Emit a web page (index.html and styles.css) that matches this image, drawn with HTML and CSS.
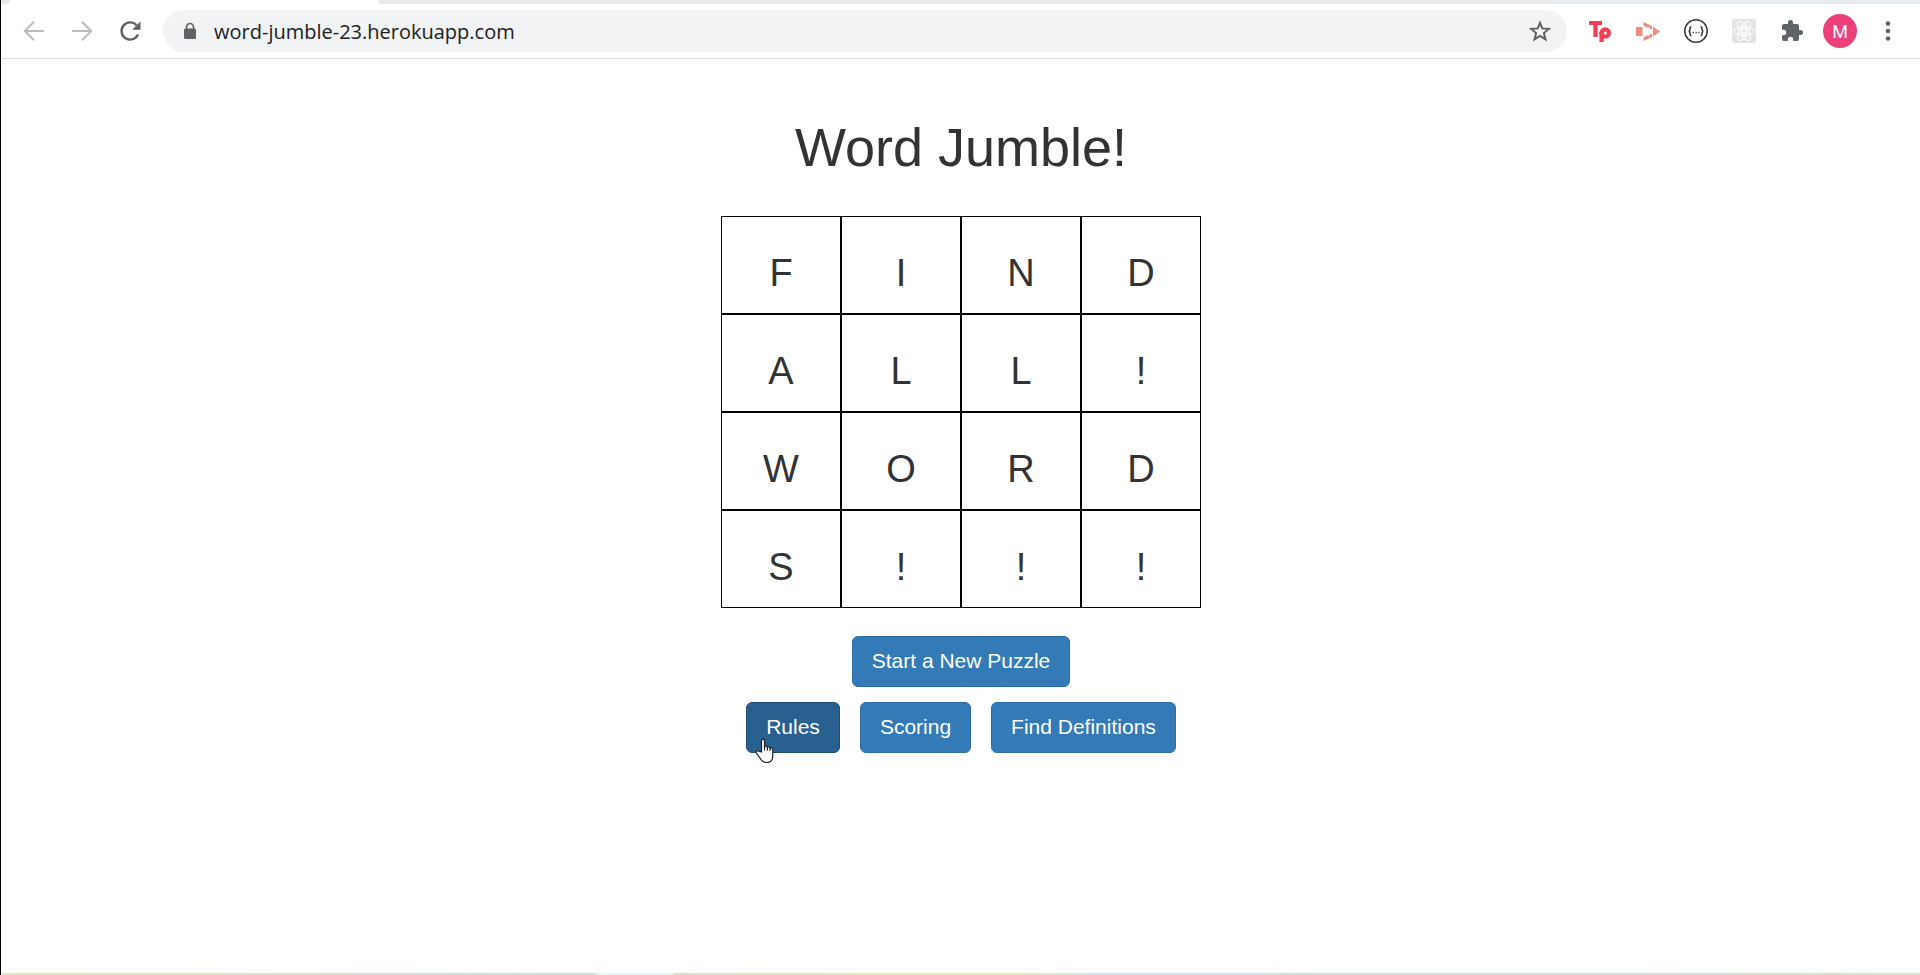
FILE: index.html
```html
<!DOCTYPE html>
<html lang="en">
<head>
<meta charset="utf-8">
<title>Word Jumble!</title>
<link rel="stylesheet" href="styles.css">
</head>
<body>
<div class="window">
  <div class="tab-strip"><span class="tab-edge"></span><span class="active-tab"></span><span class="tab-rest"></span></div>
  <header class="toolbar">
    <nav class="nav" aria-label="Browser navigation">
      <button class="tool" aria-label="Back" disabled><svg width="24" height="24" viewBox="0 0 24 24" fill="none" stroke="#babcbe" stroke-width="2"><path d="M22 12H3.500M12 2.700 2.700 12l9.300 9.300"/></svg></button>
      <button class="tool" aria-label="Forward" disabled><svg width="24" height="24" viewBox="0 0 24 24" fill="none" stroke="#babcbe" stroke-width="2"><path d="M2 12h18.500M12 2.700l9.300 9.300-9.300 9.300"/></svg></button>
      <button class="tool" aria-label="Reload"><svg width="24" height="24" viewBox="0 0 24 24"><path d="M20 15.500A8.600 8.600 0 1 1 18.500 6.200" fill="none" stroke="#5f6368" stroke-width="2.400"/><path d="M22.500 2.500v8.300h-8.300z" fill="#5f6368"/></svg></button>
    </nav>
    <div class="omnibox">
      <svg class="lock" width="14" height="18" viewBox="0 0 14 18"><path d="M3.500 8V5a3.500 3.500 0 0 1 7 0v3" fill="none" stroke="#5f6368" stroke-width="1.700"/><rect x="1" y="6.500" width="12" height="10.500" rx="1.500" fill="#5f6368"/></svg>
      <input class="url" type="text" aria-label="Address" value="word-jumble-23.herokuapp.com">
      <button class="tool" aria-label="Bookmark this page"><svg width="24" height="24" viewBox="0 0 24 24" fill="none" stroke="#5f6368" stroke-width="2"><path d="m12 3.800 2.300 5.600 6.600.5-5 4.200 1.600 6.300-5.500-3.400-5.500 3.400 1.600-6.300-5-4.200 6.600-.5z"/></svg></button>
    </div>
    <div class="extensions">
      <button class="tool" aria-label="Tp"><svg width="24" height="24" viewBox="0 0 24 24" fill="none" stroke="#ef4056" stroke-width="4.200"><path d="M1 4h13M7.500 3v15"/><circle cx="17.300" cy="14" r="3.700"/><path d="M13.500 13v10"/></svg></button>
      <button class="tool" aria-label="Screen recorder"><svg width="24" height="24" viewBox="0 0 24 24" fill="#f28b82"><path d="M0 8h6.500v9H0zM7.500 3l8.500 4v3h-2V8.500H9.500V7h-2zM7.500 22l8.500-4v-3h-2v1.500H9.500V18h-2zM17 7.500l7 5-7 5z"/></svg></button>
      <button class="tool" aria-label="JSON viewer"><svg width="24" height="24" viewBox="0 0 24 24" fill="none" stroke="#35383c" stroke-width="1.500"><circle cx="12" cy="12" r="11.200"/><path d="M7.500 7.800C4.500 7.800 7.500 12.300 4.500 12.300c3 0 0 4.500 3 4.500M16.500 7.800c3 0 0 4.500 3 4.500-3 0 0 4.500-3 4.500"/><path d="M8.700 13.500h7" stroke-dasharray="1.300 1.500"/></svg></button>
      <button class="tool" aria-label="React tools"><svg width="24" height="24" viewBox="0 0 24 24"><rect width="24" height="24" rx="2" fill="#e1e3e4"/><g fill="none" stroke="#fff"><ellipse cx="12" cy="12" rx="10.500" ry="4.500"/><ellipse cx="12" cy="12" rx="10.500" ry="4.500" transform="rotate(60 12 12)"/><ellipse cx="12" cy="12" rx="10.500" ry="4.500" transform="rotate(120 12 12)"/><circle cx="12" cy="12" r="2.500" stroke-width="1.500"/></g></svg></button>
      <button class="tool" aria-label="Extensions"><svg width="24" height="24" viewBox="0 0 24 24" fill="#5f6368"><path d="M20.500 11H19V7a2 2 0 0 0-2-2h-4V3.500a2.500 2.500 0 0 0-5 0V5H4a2 2 0 0 0-2 2v3.800h1.500a2.700 2.700 0 0 1 0 5.400H2V20a2 2 0 0 0 2 2h3.800v-1.500a2.700 2.700 0 0 1 5.400 0V22H17a2 2 0 0 0 2-2v-4h1.500a2.500 2.500 0 0 0 0-5z"/></svg></button>
      <button class="avatar" aria-label="Profile M">M</button>
      <button class="tool" aria-label="Menu"><svg width="24" height="24" viewBox="0 0 24 24" fill="#5f6368"><circle cx="12" cy="4.500" r="2.300"/><circle cx="12" cy="12" r="2.300"/><circle cx="12" cy="19.500" r="2.300"/></svg></button>
    </div>
  </header>
  <main class="page">
    <h1 class="title">Word Jumble!</h1>
    <table class="board">
      <tbody>
      <tr><td>F</td><td>I</td><td>N</td><td>D</td></tr>
      <tr><td>A</td><td>L</td><td>L</td><td>!</td></tr>
      <tr><td>W</td><td>O</td><td>R</td><td>D</td></tr>
      <tr><td>S</td><td>!</td><td>!</td><td>!</td></tr>
      </tbody>
    </table>
    <div class="actions">
      <button class="btn">Start a New Puzzle</button>
    </div>
    <div class="actions">
      <button class="btn btn-hover">Rules<svg class="pointer" width="20" height="26" viewBox="0 0 20 26"><path d="M6.500 14V3c0-2.400 3-2.400 3 0v5.500c1-1 2.800-.6 2.900.7 1-.8 2.600-.3 2.700.9 1.200-.6 2.700 0 2.700 1.500V18c0 4-2.500 6.500-6.300 6.500-3.500 0-5-1.500-6.500-4.500L1.300 15c-.8-2 1.500-3 2.700-1.700z" fill="#fff" stroke="#1b1b26" stroke-width="1.200"/><path d="M9.500 8v4.500M12.400 9v3.500M15.100 10v3" stroke="#1b1b26" stroke-width="1.200"/></svg></button>
      <button class="btn">Scoring</button>
      <button class="btn">Find Definitions</button>
    </div>
  </main>
  <footer class="bottom-strip"></footer>
</div>
</body>
</html>
```
FILE: styles.css
```css
* { box-sizing: border-box; }
body { margin: 0; background: #fff; color: #333; font-family: "Liberation Sans", Arial, sans-serif; }
button { font: inherit; margin: 0; }
.window { min-height: 100vh; display: flex; flex-direction: column; border-left: 1px solid #000; }

.tab-strip { display: flex; height: 4px; background: #fff; }
.tab-edge { width: 9px; background: #e7eaed; border-bottom-right-radius: 8px; }
.active-tab { width: 368px; }
.tab-rest { flex: 1; background: #e7eaed; border-bottom-left-radius: 8px; }

.toolbar { display: flex; align-items: center; height: 55px; padding: 0 20px 0 21px; border-bottom: 1px solid #dadce0; }
.nav { display: flex; gap: 24px; }
.tool { display: flex; padding: 0; border: 0; background: none; }
.omnibox { flex: 1; display: flex; align-items: center; height: 42px; margin: 0 21px; padding: 0 15px 0 20px; border-radius: 21px; background: #f1f3f4; }
.url { flex: 1; min-width: 0; margin: 0 17px; padding: 0; border: 0; background: none; color: #202124; font: 20px "Open Sans", sans-serif; }
.extensions { display: flex; align-items: center; gap: 24px; }
.avatar { width: 34px; height: 34px; margin: 0 -5px; padding: 0; border: 0; border-radius: 50%; background: #ec407a; color: #fff; font: 18px Roboto, sans-serif; }

.page { flex: 1; display: flex; flex-direction: column; align-items: center; padding-left: 1px; }
.title { margin: 58px 0 39px; font-size: 54px; line-height: 60px; font-weight: 400; }
.board { border-collapse: separate; border-spacing: 0; margin-bottom: 28px; }
.board td { width: 120px; height: 98px; padding: 16px 0 0; border: 1px solid #000; font-size: 38px; line-height: 44px; text-align: center; }
.actions { display: flex; gap: 20px; margin-bottom: 15px; }
.btn { position: relative; height: 51px; padding: 0 19px 2px; border: 1px solid #2e6da4; border-radius: 6px; background: #337ab7; color: #fff; font-size: 21px; line-height: 28px; }
.btn-hover { background: #286090; border-color: #204d74; }
.pointer { position: absolute; left: 8px; top: 35px; }
.bottom-strip { height: 2px; background: linear-gradient(90deg, #e1e8bb 0, #e1e8bb 4%, #d5ddd6 20%, #d2dfdf 31%, #e9f2f6 31%, #e9f2f6 35%, #d7e1cf 35%, #e2e9bb 45%, #e2e9bb 53%, #d3e5ea 57%, #d3e5ea 65%, #d5ddd8 68%, #d5ddd8 85%, #d8e4cb 100%); }
```
